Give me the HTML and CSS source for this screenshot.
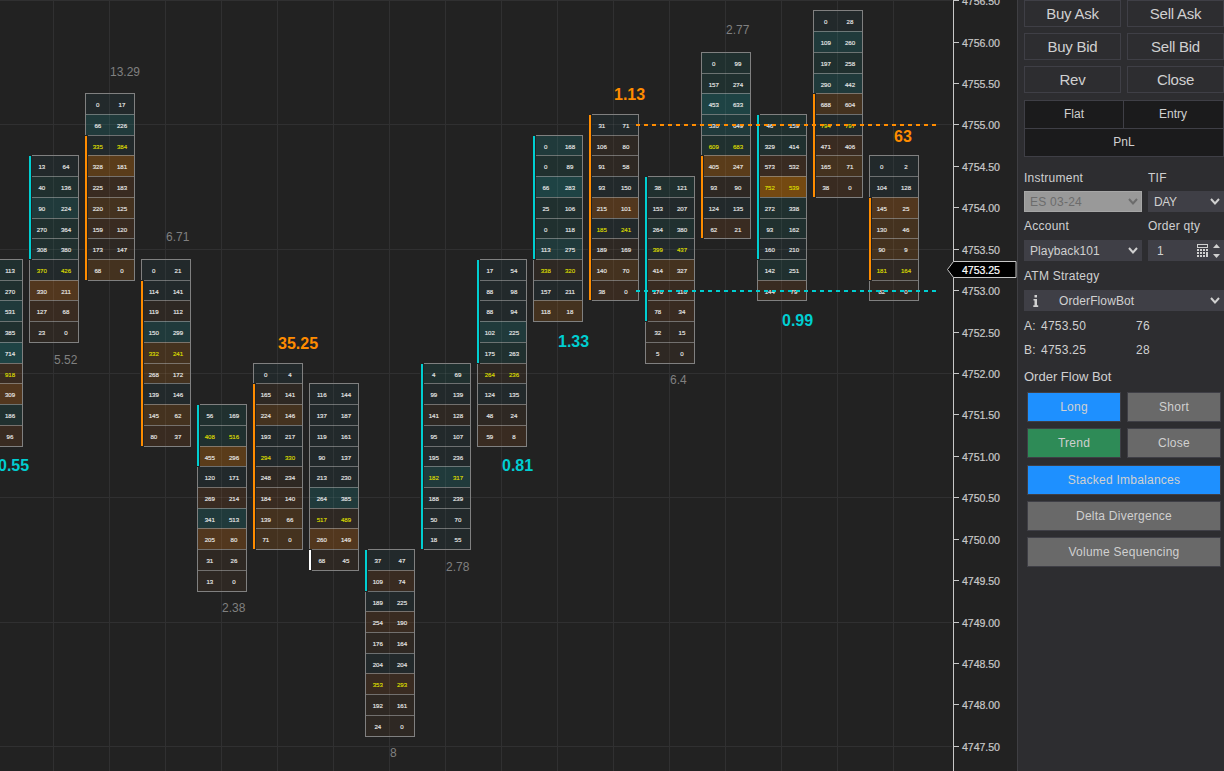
FILE: index.html
```html
<!DOCTYPE html>
<html lang="en">
<head>
<meta charset="utf-8">
<title>Order Flow Chart</title>
<link rel="stylesheet" href="styles.css">
</head>
<body>
<div class="app">
  <main class="chart">
    <svg id="chart" class="chart-canvas" width="1017" height="771" viewBox="0 0 1017 771"></svg>
  </main>
  <aside class="panel">
    <div class="trade-grid">
      <button class="trade first">Buy Ask</button><button class="trade first">Sell Ask</button>
      <button class="trade">Buy Bid</button><button class="trade">Sell Bid</button>
      <button class="trade">Rev</button><button class="trade">Close</button>
    </div>
    <div class="position">
      <div class="pos-cell">Flat</div><div class="pos-cell entry">Entry</div>
      <div class="pos-cell pnl">PnL</div>
    </div>
    <div class="fields">
      <div class="field">
        <div class="label first-label">Instrument</div>
        <div class="select disabled"><span>ES 03-24</span><svg class="chev" viewBox="0 0 10 7"><path d="M1 1l4 4.5L9 1"/></svg></div>
      </div>
      <div class="field">
        <div class="label first-label">TIF</div>
        <div class="select"><span class="tif">DAY</span><svg class="chev" viewBox="0 0 10 7"><path d="M1 1l4 4.5L9 1"/></svg></div>
      </div>
      <div class="field">
        <div class="label">Account</div>
        <div class="select"><span class="tight">Playback101</span><svg class="chev" viewBox="0 0 10 7"><path d="M1 1l4 4.5L9 1"/></svg></div>
      </div>
      <div class="field">
        <div class="label">Order qty</div>
        <div class="select qty"><span>1</span>
          <svg class="calc" width="24" height="14" viewBox="0 0 24 14" shape-rendering="crispEdges">
            <path class="stroke" d="M.5 .5h10v3h-10z"/>
            <path class="fill" d="M0 5h2v2H0zM3 5h2v2H3zM6 5h2v2H6zM9 5h2v2H9zM0 8h2v2H0zM3 8h2v2H3zM6 8h2v2H6zM9 8h2v5H9zM0 11h2v2H0zM3 11h2v2H3zM6 11h2v2H6z"/>
            <path class="fill smooth" d="M16 4l3.5-4L23 4zM16 10h7l-3.5 4z"/>
          </svg>
        </div>
      </div>
      <div class="field wide">
        <div class="label">ATM Strategy</div>
        <div class="select atm">
          <svg class="info" width="6" height="12" viewBox="0 0 6 12"><path d="M1.5 0h2.5v2.5H1.5zM.5 4H4v6.2h1.2V12H.3v-1.8h1.2V5.6h-1z"/></svg>
          <span class="tight">OrderFlowBot</span><svg class="chev" viewBox="0 0 10 7"><path d="M1 1l4 4.5L9 1"/></svg>
        </div>
      </div>
    </div>
    <div class="quotes">
      <span>A:</span><span>4753.50</span><span>76</span>
      <span>B:</span><span>4753.25</span><span>28</span>
    </div>
    <div class="bot-title">Order Flow Bot</div>
    <div class="bot">
      <button class="bot-btn blue">Long</button><button class="bot-btn">Short</button>
      <button class="bot-btn green">Trend</button><button class="bot-btn">Close</button>
    </div>
    <div class="bot-wide">
      <button class="bot-btn blue">Stacked Imbalances</button>
      <button class="bot-btn">Delta Divergence</button>
      <button class="bot-btn">Volume Sequencing</button>
    </div>
  </aside>
</div>
<script src="chart.js"></script>
</body>
</html>
```

FILE: styles.css
```css
* { box-sizing: border-box; }
body { margin: 0; background: #222; overflow: hidden; font-family: "Liberation Sans", Arial, sans-serif; }
.app { display: flex; width: 1224px; height: 771px; }
.chart { width: 1017px; height: 771px; background: #222; }
.chart-canvas { display: block; }

.grid { fill: #303031; }
.a { fill: #22292b; } .b { fill: #20302f; } .c { fill: #203a3b; } .d { fill: #1e4344; }
.e { fill: #2e2823; } .f { fill: #392b21; } .g { fill: #44321f; } .h { fill: #52371e; }
.i { fill: #5a3c1a; } .j { fill: #744911; }
.mid { fill: #fff; opacity: .06; }
.row { fill: #a0a0a0; opacity: .6; }
.edge { fill: #808080; }
.mask { fill: #222; }
.cyan { fill: #00ced1; } .orange { fill: #ff8c00; } .white { fill: #fff; }
.vol { font-size: 6.1px; fill: #e8e8e8; stroke: #e8e8e8; stroke-width: .15px; text-anchor: middle; }
.vol.poc { fill: #dcdc00; stroke: #dcdc00; }
.ratio { font-size: 12px; fill: #808080; }
.ratio.big { font-size: 16px; font-weight: 700; }
.ratio.cyan { fill: #00ced1; } .ratio.orange { fill: #ff8c00; }
.level { stroke-width: 2px; stroke-dasharray: 4 4; }
.level.cyan { stroke: #00ced1; } .level.orange { stroke: #ff8c00; }
.axis { fill: #c8c8c8; }
.price { font-size: 10.6px; fill: #c8c8c8; stroke: #c8c8c8; stroke-width: .2px; }
.price.now { fill: #fff; stroke: #fff; }
.flag { fill: #000; stroke: #c8c8c8; stroke-width: 1px; }

.panel { width: 207px; background: #2d2d30; border-left: 1px solid #3f3f43; padding-left: 6px; color: #d0d0d0; font-size: 12px; letter-spacing: .25px; }
button { font-family: inherit; color: inherit; padding: 0; margin: 0; }
.trade-grid { display: grid; grid-template-columns: 97px 97px; column-gap: 6px; row-gap: 6px; }
.trade { height: 27px; line-height: 25px; font-size: 15px; letter-spacing: -.25px; background: #2d2d30; border: 1px solid #3f3f46; }
.position { display: grid; grid-template-columns: 98px 100px; margin-top: 7px; border: 1px solid #3f3f46; width: 200px; background: #1b1b1c; letter-spacing: 0; }
.pos-cell { height: 27px; line-height: 27px; text-align: center; }
.entry { border-left: 1px solid #3f3f46; padding-right: 1px; }
.pnl { grid-column: 1 / 3; height: 28px; border-top: 1px solid #3f3f46; }
.fields { display: grid; grid-template-columns: 118px 76px; column-gap: 6px; margin-top: 13px; }
.field { height: 49px; }
.wide { grid-column: 1 / 3; height: 43px; padding-top: 1px; }
.label { height: 21px; line-height: 15px; }
.first-label { line-height: 17px; }
.select { height: 21px; display: flex; align-items: center; justify-content: space-between; padding: 0 4px 0 6px; background: #3f3f46; }
.disabled { background: #999; border: 1px solid #a6a6a6; color: #6c6c6c; padding: 0 3px 0 5px; }
.tif { letter-spacing: -.4px; }
.tight { letter-spacing: .1px; }
.chev { width: 10px; height: 7px; fill: none; stroke: #d0d0d0; stroke-width: 2px; }
.disabled .chev { stroke: #6c6c6c; }
.qty { padding: 0 3px 0 9px; }
.calc .stroke { fill: none; stroke: #d0d0d0; }
.calc .fill { fill: #d0d0d0; }
.calc .smooth { shape-rendering: auto; }
.info { fill: #d0d0d0; margin-left: 3px; margin-right: 20px; }
.atm span { flex: 1; }
.quotes { display: grid; grid-template-columns: 17px 95px 80px; grid-auto-rows: 24px; line-height: 24px; margin-top: 3px; }
.bot-title { font-size: 13px; letter-spacing: 0; height: 30px; line-height: 30px; }
.bot { display: grid; grid-template-columns: 94px 94px; column-gap: 6px; row-gap: 6px; margin-left: 3px; }
.bot-btn { height: 30px; line-height: 28px; border: 1px solid #3f3f46; background: #696969; font-size: 12px; letter-spacing: .25px; }
.bot-btn.blue { background: #1e90ff; }
.bot-btn.green { background: #2e8b57; }
.bot-wide { display: flex; flex-direction: column; gap: 6px; width: 194px; margin: 7px 0 0 3px; }
```

FILE: chart.js
```javascript
const svg = document.getElementById('chart');
const NS = 'http://www.w3.org/2000/svg';
function add(tag, cls, attrs, text) {
  const el = document.createElementNS(NS, tag);
  el.setAttribute('class', cls);
  for (const k in attrs) el.setAttribute(k, attrs[k]);
  if (text !== undefined) el.textContent = text;
  svg.appendChild(el);
}
const rect = (cls, x, y, width, height) => add('rect', cls, { x, y, width, height });

// top edge of each price row, in pixels
const Y = [10,31,52,73,93,114,135,155,176,197,218,238,259,280,300,321,342,363,383,404,425,446,466,487,508,528,549,570,591,611,632,653,673,694,715,736];

// x, first row, bar colour, bar from, bar to, point of control row, "tint bid ask" rows
const bars = [
  [-27,12,'',0,0,5,'b 98 113,b 187 270,c 310 531,b 301 385,d 402 714,f 924 918,h 412 309,b 120 186,f 122 96'],
  [29,7,'cyan',0,5,5,'a 13 64,b 40 136,c 90 224,b 270 364,b 308 380,a 370 426,h 330 211,f 127 68,e 23 0'],
  [85,4,'orange',2,9,2,'a 0 17,c 66 226,a 335 384,i 328 181,f 225 183,g 220 125,f 159 120,e 173 147,g 68 0'],
  [141,12,'orange',1,9,4,'a 0 21,a 114 141,e 119 112,c 150 299,g 332 241,g 268 172,a 139 146,g 145 62,f 80 37'],
  [197,19,'cyan',0,3,1,'b 56 169,b 408 516,i 455 296,a 120 171,f 269 214,c 341 513,h 205 80,e 31 26,e 13 0'],
  [253,17,'orange',1,9,4,'a 0 4,e 165 141,g 224 146,a 193 217,a 294 330,e 248 234,f 184 140,g 139 66,g 71 0'],
  [309,18,'white',8,9,6,'a 116 144,a 137 187,a 119 161,a 90 137,a 213 230,c 264 385,e 517 489,h 260 149,e 68 45'],
  [365,26,'cyan',0,2,6,'a 37 47,f 109 74,a 189 225,f 254 190,e 176 164,a 204 204,f 353 293,e 192 161,e 24 0'],
  [421,17,'cyan',0,9,5,'b 4 69,a 99 139,e 141 128,a 95 107,a 195 236,c 182 317,a 188 239,a 50 70,a 18 55'],
  [477,12,'cyan',0,5,5,'a 17 54,a 88 98,a 88 94,c 102 225,b 175 263,e 264 236,a 124 135,e 48 24,f 59 8'],
  [533,6,'cyan',0,6,6,'c 0 168,b 0 89,d 66 283,b 25 106,b 0 118,c 113 275,e 338 320,a 157 211,g 118 18'],
  [589,5,'orange',0,9,5,'a 31 71,e 106 80,e 91 58,a 93 150,h 215 101,a 185 241,e 189 169,g 140 70,f 38 0'],
  [645,8,'cyan',0,7,3,'b 38 121,a 153 207,b 264 380,a 399 437,g 414 327,f 176 116,f 78 34,e 32 15,e 5 0'],
  [701,2,'orange',5,9,4,'b 0 99,b 157 274,d 453 633,c 530 649,b 609 683,i 405 247,e 93 90,a 124 135,f 62 21'],
  [757,5,'cyan',0,7,3,'b 46 159,b 329 414,f 573 532,j 752 539,b 272 338,b 93 162,a 160 210,b 142 251,f 144 79'],
  [813,0,'orange',4,9,5,'a 0 28,c 109 260,b 197 258,c 290 442,g 688 604,a 794 797,f 471 406,g 165 71,f 38 0'],
  [869,7,'orange',2,6,5,'a 0 2,a 104 128,h 145 25,g 130 46,g 90 9,e 181 164,e 82 0']
];

for (let x = 53; x < 940; x += 56) rect('grid', x, 0, 1, 771);
for (const y of [0, 124, 249, 373, 497, 622, 746]) rect('grid', 0, y, 952, 1);

for (const [x, k, colour, from, to, poc, data] of bars) {
  const rows = data.split(',').map(r => r.split(' '));
  const top = Y[k], bottom = Y[k + rows.length];
  rows.forEach((r, n) => {
    const y = Y[k + n];
    rect(r[0], x, y, 50, Y[k + n + 1] - y);
    if (n) rect('row', x + 1, y, 48, 1);
  });
  rect('mid', x + 24, top + 1, 1, bottom - top - 1);
  for (const g of [124, 249, 373, 497, 622]) if (g > top && g < bottom) rect('mid', x + 1, g, 48, 1);
  rect('edge', x, top, 50, 1);
  rect('edge', x, bottom, 50, 1);
  rect('edge', x, top, 1, bottom - top);
  rect('edge', x + 49, top, 1, bottom - top);
  if (colour) {
    const a = Y[k + from], b = Y[k + to];
    rect('mask', x - 1, a, 4, b - a + 1);
    rect(colour, x, a + 1, 2, b - a - 1);
  }
  rows.forEach((r, n) => {
    const cls = n === poc ? 'vol poc' : 'vol', y = Y[k + n] + 13.6;
    if (x > 0) add('text', cls, { x: x + 12.8, y }, r[1]);
    add('text', cls, { x: x + 37, y }, r[2]);
  });
}

for (const [x, y, t] of [[110,76,'13.29'],[166,241,'6.71'],[54,364,'5.52'],[222,612,'2.38'],[390,757,'8'],[446,571,'2.78'],[670,384,'6.4'],[726,34,'2.77']])
  add('text', 'ratio', { x, y }, t);
for (const [x, y, t, c] of [[-2,471,'0.55','cyan'],[278,349,'35.25','orange'],[502,471,'0.81','cyan'],[558,347,'1.33','cyan'],[614,100,'1.13','orange'],[782,326,'0.99','cyan'],[894,142,'63','orange']])
  add('text', 'ratio big ' + c, { x, y }, t);

add('line', 'level orange', { x1: 636, x2: 936, y1: 125, y2: 125 });
add('line', 'level cyan', { x1: 636, x2: 936, y1: 291, y2: 291 });

rect('axis', 953, 0, 1, 771);
for (let i = 0; i < 19; i++) {
  const y = Math.floor(0.6 + 41.43 * i);
  rect('axis', 954, y, 5, 1);
  add('text', 'price', { x: 962, y: y + 5, textLength: 38 }, (4756.5 - i * 0.5).toFixed(2));
}
add('path', 'flag', { d: 'M947.5 269.5L953.5 261.5H1016V277.5H953.5Z' });
add('text', 'price now', { x: 962, y: 274, textLength: 38 }, '4753.25');
```
